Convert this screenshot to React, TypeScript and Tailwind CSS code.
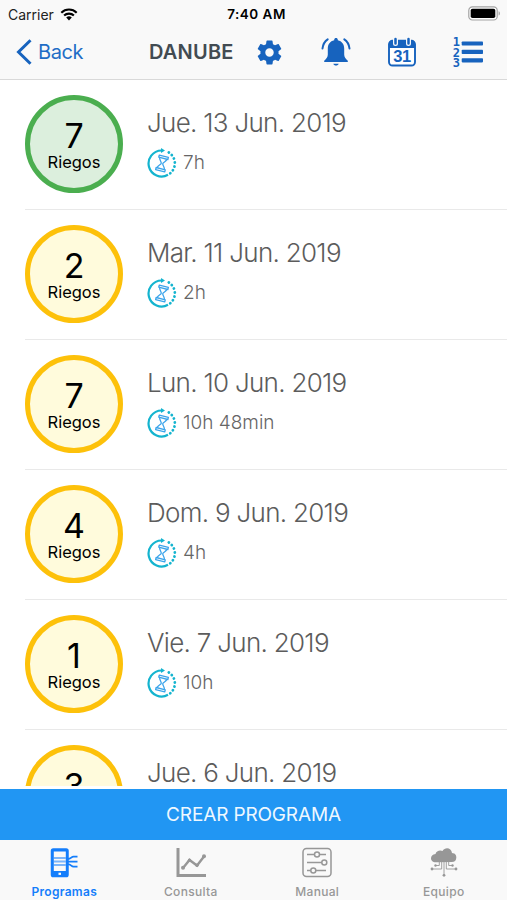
import { clsx } from "clsx";

type Program = {
  count: number;
  date: string;
  duration: string;
  active?: boolean;
};

const programs: Program[] = [
  { count: 7, date: "Jue. 13 Jun. 2019", duration: "7h", active: true },
  { count: 2, date: "Mar. 11 Jun. 2019", duration: "2h" },
  { count: 7, date: "Lun. 10 Jun. 2019", duration: "10h 48min" },
  { count: 4, date: "Dom. 9 Jun. 2019", duration: "4h" },
  { count: 1, date: "Vie. 7 Jun. 2019", duration: "10h" },
  { count: 3, date: "Jue. 6 Jun. 2019", duration: "" },
];

const tabs = [
  { label: "Programas", icon: PhoneIcon, active: true },
  { label: "Consulta", icon: ChartIcon, active: false },
  { label: "Manual", icon: SlidersIcon, active: false },
  { label: "Equipo", icon: CloudIcon, active: false },
];

function WifiIcon() {
  return (
    <svg width="18" height="13" viewBox="0 0 18 13" fill="none" stroke="#000" strokeWidth="2.1">
      <path d="M1.3 4.7a11 11 0 0 1 15.4 0" />
      <path d="M4.1 7.6a7 7 0 0 1 9.8 0" />
      <path d="M9 12.4 6.2 9.6a4 4 0 0 1 5.6 0z" fill="#000" stroke="none" />
    </svg>
  );
}

function BatteryIcon() {
  return (
    <svg width="33" height="15" viewBox="0 0 33 15">
      <rect x="0.8" y="0.8" width="28.4" height="13.2" rx="3.6" fill="#fff" stroke="#a3a3a3" strokeWidth="1.2" />
      <rect x="2.7" y="2.7" width="24.6" height="9.4" rx="1.8" fill="#000" />
      <path d="M30.6 5.2c1.7.6 1.7 3.8 0 4.4z" fill="#a3a3a3" />
    </svg>
  );
}

function GearIcon() {
  return (
    <svg width="29" height="29" viewBox="0 0 24 24" fill="#1763be">
      <path d="M19.43 12.98c.04-.32.07-.64.07-.98s-.03-.66-.07-.98l2.11-1.65c.19-.15.24-.42.12-.64l-2-3.46c-.12-.22-.39-.3-.61-.22l-2.49 1c-.52-.4-1.08-.73-1.69-.98l-.38-2.65C14.46 2.18 14.25 2 14 2h-4c-.25 0-.46.18-.49.42l-.38 2.65c-.61.25-1.17.59-1.69.98l-2.49-1c-.23-.09-.49 0-.61.22l-2 3.46c-.13.22-.07.49.12.64l2.11 1.65c-.04.32-.07.65-.07.98s.03.66.07.98l-2.11 1.65c-.19.15-.24.42-.12.64l2 3.46c.12.22.39.3.61.22l2.49-1c.52.4 1.08.73 1.69.98l.38 2.65c.03.24.24.42.49.42h4c.25 0 .46-.18.49-.42l.38-2.65c.61-.25 1.17-.59 1.69-.98l2.49 1c.23.09.49 0 .61-.22l2-3.46c.12-.22.07-.49-.12-.64l-2.11-1.65zM12 15.5c-1.93 0-3.5-1.57-3.5-3.5s1.57-3.5 3.5-3.5 3.5 1.57 3.5 3.5-1.57 3.5-3.5 3.5z" />
    </svg>
  );
}

function BellIcon() {
  return (
    <svg width="30" height="30" viewBox="0 0 30 30" fill="#1763be">
      <path d="M13.2 2.8c0-2.4 3.6-2.4 3.6 0v.5c4.2 1 6.4 4 6.4 8.3v5.9c0 2.7 1.3 4.2 3.6 6.2v1.3H3.2v-1.3c2.3-2 3.6-3.5 3.6-6.2v-5.9c0-4.3 2.2-7.3 6.4-8.3z" />
      <path d="M12.3 26.7h5.4c-.5 2.4-4.9 2.4-5.4 0z" />
      <path
        d="M1.5 11.5C2 7.3 3.5 4.5 6.7 2.4M28.5 11.5C28 7.3 26.5 4.500 23.300 2.400"
        fill="none"
        stroke="#1763be"
        strokeWidth="2"
        strokeLinecap="round"
      />
    </svg>
  );
}

function CalendarIcon() {
  return (
    <svg width="30" height="30" viewBox="0 0 30 30">
      <rect x="2" y="3.8" width="26" height="24.7" rx="3.5" fill="#fff" stroke="#1763be" strokeWidth="1.9" />
      <path d="M2 11V6.5Q2 3.8 5 3.8h20q3 0 3 2.700V11z" fill="#1763be" />
      <path d="M8.5 2.2v4.3M21.5 2.2v4.3" stroke="#f9f9f9" strokeWidth="5" strokeLinecap="round" />
      <path d="M8.5 2v4.5M21.5 2v4.5" stroke="#1763be" strokeWidth="2.5" strokeLinecap="round" />
      <text
        x="15"
        y="24.8"
        textAnchor="middle"
        fontSize="16.5"
        fontWeight="700"
        letterSpacing="-0.5"
        fill="#1763be"
        className="font-['Liberation_Sans',sans-serif]"
      >
        31
      </text>
    </svg>
  );
}

function NumberedListIcon() {
  return (
    <svg width="31" height="31" viewBox="0 0 31 31" fill="#1763be" className="overflow-visible">
      <g fontSize="12" fontWeight="700" className="font-['DejaVu_Sans_Mono',monospace]">
        <text x="-0.3" y="9">1</text>
        <text x="-0.3" y="19.5">2</text>
        <text x="-0.3" y="30">3</text>
      </g>
      <rect x="8.7" y="4.4" width="21.3" height="4.2" rx="0.8" />
      <rect x="8.7" y="12.8" width="21.3" height="4.2" rx="0.8" />
      <rect x="8.7" y="21.2" width="21.3" height="4.2" rx="0.8" />
    </svg>
  );
}

function HourglassIcon() {
  return (
    <svg width="30" height="30" viewBox="0 0 30 30" fill="none">
      <path d="M21 26.800A13 13 0 1 1 14.500 2.500" stroke="#14b4cf" strokeWidth="2.200" />
      <path d="M14 0v5l4-2.500z" fill="#14b4cf" />
      <path d="M21.800 4.400A13 13 0 0 1 23 25.500" stroke="#14b4cf" strokeWidth="2.800" strokeLinecap="round" strokeDasharray="0.1 3.9" />
      <g transform="rotate(14 15 15.500)" stroke="#3ba4ea" strokeWidth="1.300" strokeLinejoin="round">
        <path d="M10.300 8h9.400v2.200h-9.400zM10.300 20.800h9.400V23h-9.400z" />
        <path d="M11.300 10.200c0 2.500 2.900 3.600 2.900 5.300s-2.900 2.800-2.900 5.300M18.700 10.200c0 2.500-2.900 3.600-2.900 5.300s2.900 2.800 2.900 5.300" />
      </g>
    </svg>
  );
}

function PhoneIcon() {
  return (
    <svg width="30" height="32" viewBox="0 0 30 32" fill="none" stroke="currentColor">
      <rect x="2.5" y="2" width="16.5" height="27.5" rx="1.8" fill="currentColor" strokeWidth="1.5" />
      <path d="M4.8 4.5h12V24h-12z" fill="#f9f9f9" stroke="none" />
      <path d="M4.8 11h12M4.8 14.5h12M4.8 18h12" strokeWidth="1.8" opacity="0.55" />
      <path d="M18.500 12c4 0 3.500-2.300 6-2.300h4M18.500 14.700h10M18.500 17.200c4 0 3.500 2.500 6 2.500h4" strokeWidth="1.800" />
      <rect x="9.5" y="25.7" width="2.5" height="2.2" fill="#f9f9f9" stroke="none" />
    </svg>
  );
}

function ChartIcon() {
  return (
    <svg width="30" height="32" viewBox="0 0 30 32" fill="none" stroke="currentColor">
      <path d="M2 1v27.500H30" strokeWidth="3" />
      <path d="M7 21l6.500-8 7.500 5.500L28 9.500" strokeWidth="2.400" />
      <g fill="currentColor" stroke="none">
        <circle cx="7" cy="20.7" r="2" />
        <circle cx="13.5" cy="13.3" r="1.7" />
        <circle cx="21" cy="18.3" r="1.7" />
        <circle cx="28" cy="9.3" r="2" />
      </g>
    </svg>
  );
}

function SlidersIcon() {
  return (
    <svg width="30" height="32" viewBox="0 0 30 32" fill="none" stroke="currentColor" strokeWidth="1.5">
      <rect x="1" y="1.5" width="28" height="28" rx="3.5" />
      <path d="M5 7.5h19M5 15.5h19M5 23.500h19" />
      <g fill="#f9f9f9">
        <circle cx="15" cy="7.5" r="2.5" />
        <circle cx="22.3" cy="15.5" r="2.5" />
        <circle cx="11.3" cy="23.5" r="2.5" />
      </g>
    </svg>
  );
}

function CloudIcon() {
  return (
    <svg width="30" height="32" viewBox="0 0 30 32" fill="none" stroke="currentColor">
      <path
        d="M7.5 15.2C3.5 15.5 2 13.2 2 11.2s1.5-4 4.5-4.2c.5-3 4.5-4.500 7-3 2.500-4.500 9-3.500 9.500 2 3.500.2 4.500 2.500 4.300 4.800 0 3-2 4.500-5 4.300z"
        fill="currentColor"
        stroke="none"
      />
      <path d="M15 15v13M12.7 15v7H3M17.3 15v7H27M10.3 15v3.500H6.500M19.700 15v3.500h3.500" strokeWidth="0.9" />
      <g fill="currentColor" stroke="none">
        <circle cx="15" cy="28.3" r="1.4" />
        <circle cx="3" cy="22" r="1.4" />
        <circle cx="27" cy="22" r="1.4" />
        <circle cx="6.5" cy="18.5" r="1.2" />
        <circle cx="23.5" cy="18.5" r="1.2" />
      </g>
    </svg>
  );
}

function Header() {
  return (
    <header className="h-[79.5px] shrink-0 border-b border-[#d9d9d9] bg-[#f9f9f9]">
      {/* Status bar */}
      <div className="grid h-7 grid-cols-3 items-center pr-1.5 pl-2 text-[14px]">
        <div className="flex items-center gap-1.5 text-[#222]">
          <span>Carrier</span>
          <WifiIcon />
        </div>
        <div className="pl-1 text-center text-[13.5px] font-semibold tracking-[0.5px] text-black">7:40 AM</div>
        <div className="flex justify-end pb-0.5">
          <BatteryIcon />
        </div>
      </div>

      {/* Navigation bar */}
      <div className="flex h-12 items-center">
        <a href="#" className="flex w-[149px] items-center gap-1.5 pl-4 text-[20px] text-[#1f6dc6]">
          <svg width="16" height="26" viewBox="0 0 16 26" fill="none" stroke="#1763be" strokeWidth="3">
            <path d="M14.5 1.2 2.5 13l12 11.800" />
          </svg>
          <span className="tracking-[-0.4px]">Back</span>
        </a>
        <h1 className="w-[106px] text-[20px] font-semibold tracking-[0.2px] text-[#424b52]">DANUBE</h1>
        <GearIcon />
        <div className="ml-[37px] flex gap-9">
          <BellIcon />
          <CalendarIcon />
          <NumberedListIcon />
        </div>
      </div>
    </header>
  );
}

function ProgramRow({ program }: { program: Program }) {
  return (
    <li className="ml-[25px] flex h-[130px] border-b border-[#e9e9e9] pt-[15px]">
      <div
        className={clsx(
          "flex h-[98px] w-[98px] shrink-0 flex-col items-center rounded-full border-[5px] pt-[17px] text-black",
          program.active ? "border-[#4bae4f] bg-[#dcefdd]" : "border-[#fdc10a] bg-[#fffbdc]",
        )}
      >
        <span className="text-[34px] leading-[38px]">{program.count}</span>
        <span className="-mt-px text-[16.5px] leading-4">Riegos</span>
      </div>
      <div className="ml-6 pt-2.5">
        <p className="text-[26px] leading-9 font-light tracking-[-0.7px] text-[#5c5c5c]">{program.date}</p>
        <div className="mt-[7px] flex h-[30px] items-center gap-1.5 text-[19px] font-light text-[#666]">
          <HourglassIcon />
          <span className="pt-0.5">{program.duration}</span>
        </div>
      </div>
    </li>
  );
}

export default function App() {
  return (
    <div className="flex h-[900px] w-[507px] flex-col overflow-hidden bg-white font-['Inter',sans-serif]">
      <Header />
      <ul className="h-[706.5px] shrink-0 overflow-hidden">
        {programs.map((program) => (
          <ProgramRow key={program.date} program={program} />
        ))}
      </ul>
      <button className="mt-[3px] h-[51px] shrink-0 bg-[#2196f3] pt-0.5 text-[19px] font-normal tracking-[-0.15px] text-[#eef8ff]">
        CREAR PROGRAMA
      </button>
      <nav className="grid h-[60px] grid-cols-4 bg-[#f9f9f9] pt-[7px] pl-px">
        {tabs.map(({ label, icon: Icon, active }) => (
          <a
            key={label}
            href="#"
            className={clsx(
              "flex flex-col items-center text-[12px] tracking-[0.3px]",
              active ? "font-semibold text-[#147efb]" : "font-medium text-[#979797]",
            )}
          >
            <Icon />
            <span className="mt-[5px] leading-4">{label}</span>
          </a>
        ))}
      </nav>
    </div>
  );
}
